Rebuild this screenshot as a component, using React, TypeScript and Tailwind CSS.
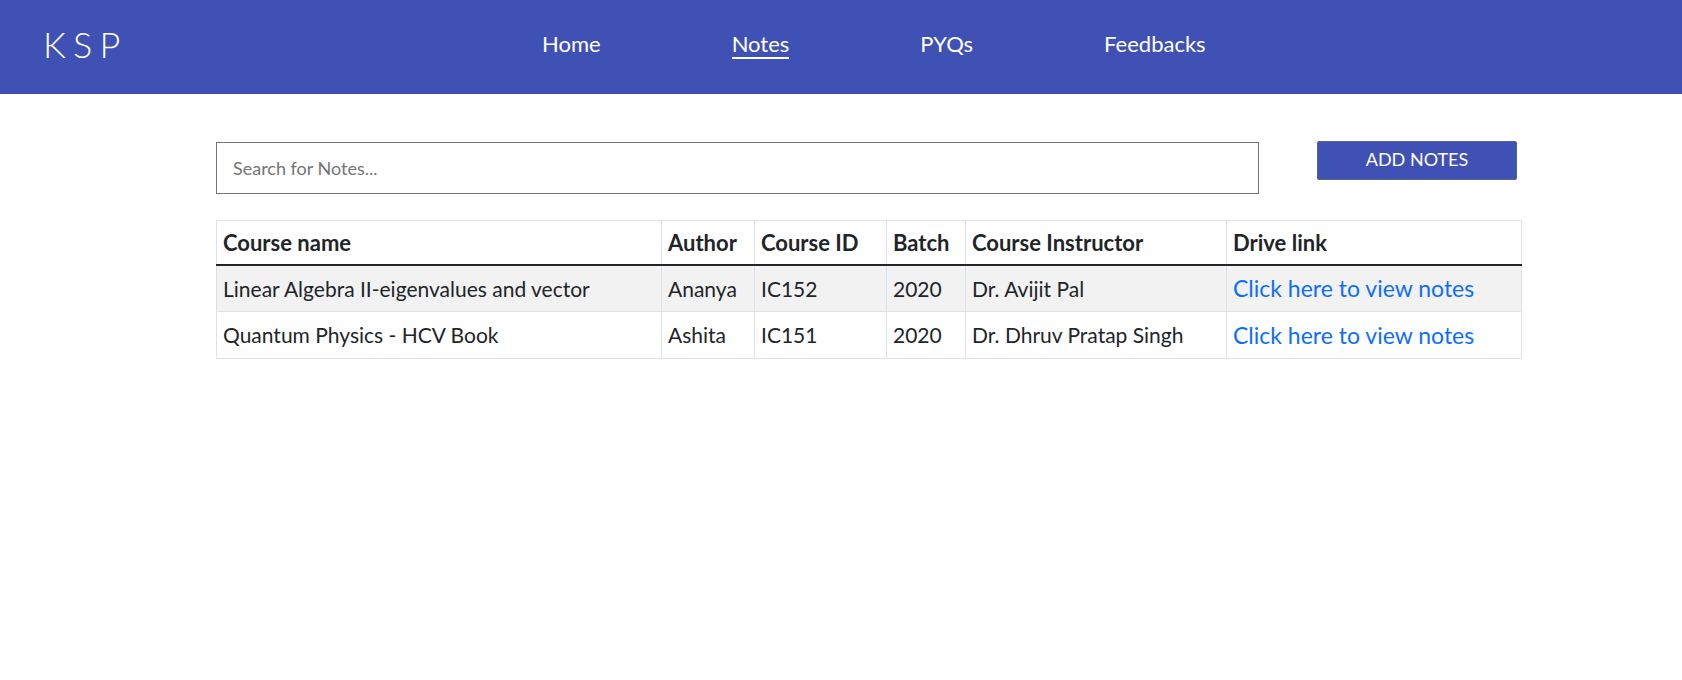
import React from "react";

interface NoteRow {
  course: string;
  author: string;
  courseId: string;
  batch: string;
  instructor: string;
}

const notes: NoteRow[] = [
  {
    course: "Linear Algebra II-eigenvalues and vector",
    author: "Ananya",
    courseId: "IC152",
    batch: "2020",
    instructor: "Dr. Avijit Pal",
  },
  {
    course: "Quantum Physics - HCV Book",
    author: "Ashita",
    courseId: "IC151",
    batch: "2020",
    instructor: "Dr. Dhruv Pratap Singh",
  },
];

const links = ["Home", "Notes", "PYQs", "Feedbacks"];

function Navbar() {
  return (
    <header className="h-[94px] bg-[#3f51b5] flex items-center px-[45px] text-white">
      <div className="w-[499px] -ml-[2px] text-[36px] font-light tracking-[0.2em] leading-none mb-[6px]">KSP</div>
      <nav className="flex gap-[131px] text-[22px] pb-[4px]">
        {links.map((link) => (
          <a
            key={link}
            href="#"
            className={
              link === "Notes"
                ? "border-b-2 border-white leading-[26px]"
                : "leading-[26px] border-b-2 border-transparent"
            }
          >
            {link}
          </a>
        ))}
      </nav>
    </header>
  );
}

export default function App() {
  return (
    <div className="min-h-screen bg-white font-['Lato','Open_Sans',sans-serif] text-[#212529]">
      <Navbar />

      <main className="ml-[216px] w-[1305px] pt-[47px]">
        <div className="flex justify-between items-start">
          <input
            type="text"
            placeholder="Search for Notes..."
            className="w-[1043px] h-[52px] mt-[1px] border border-[#767676] px-[16px] text-[18px] placeholder:text-[#757575] outline-none"
          />
          <button className="w-[200px] h-[39px] mr-[4px] pb-[3px] bg-[#3f51b5] text-white text-[18px] uppercase rounded-[2px] border border-[#5a6482]">
            Add Notes
          </button>
        </div>

        <table className="mt-[26px] w-[1305px] border-collapse text-[21px] table-fixed">
          <colgroup>
            <col className="w-[445px]" />
            <col className="w-[93px]" />
            <col className="w-[132px]" />
            <col className="w-[79px]" />
            <col className="w-[261px]" />
            <col className="w-[295px]" />
          </colgroup>
          <thead>
            <tr className="h-[44px] border-b-2 border-[#212529]">
              {["Course name", "Author", "Course ID", "Batch", "Course Instructor", "Drive link"].map((h) => (
                <th key={h} className="border border-[#dee2e6] border-b-2 border-b-[#212529] px-[6px] text-left text-[22px] font-bold whitespace-nowrap">
                  {h}
                </th>
              ))}
            </tr>
          </thead>
          <tbody>
            {notes.map((row, i) => (
              <tr key={row.courseId} className={i % 2 === 0 ? "h-[47px] bg-[#f2f2f2]" : "h-[47px] bg-white"}>
                <td className="border border-[#dee2e6] px-[6px] whitespace-nowrap">{row.course}</td>
                <td className="border border-[#dee2e6] px-[6px]">{row.author}</td>
                <td className="border border-[#dee2e6] px-[6px]">{row.courseId}</td>
                <td className="border border-[#dee2e6] px-[6px]">{row.batch}</td>
                <td className="border border-[#dee2e6] px-[6px] whitespace-nowrap">{row.instructor}</td>
                <td className="border border-[#dee2e6] px-[6px] whitespace-nowrap">
                  <a href="#" className="text-[#0d6efd] text-[23px]">
                    Click here to view notes
                  </a>
                </td>
              </tr>
            ))}
          </tbody>
        </table>
      </main>
    </div>
  );
}
